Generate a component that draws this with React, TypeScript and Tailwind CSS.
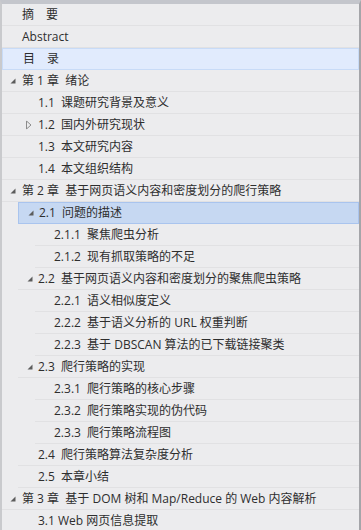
import React from "react";

type Arrow = "open" | "closed" | null;

interface Item {
  label: string;
  box: "l0" | "l1" | "l2";
  text: "t0" | "t1" | "t2";
  arrow?: Arrow;
  sel?: "light" | "strong";
}

// 目录树的每一行
const items: Item[] = [
  { label: "摘　要", box: "l0", text: "t0" },
  { label: "Abstract", box: "l0", text: "t0" },
  { label: "目　录", box: "l0", text: "t0", sel: "light" },
  { label: "第 1 章  绪论", box: "l0", text: "t0", arrow: "open" },
  { label: "1.1  课题研究背景及意义", box: "l0", text: "t1" },
  { label: "1.2  国内外研究现状", box: "l0", text: "t1", arrow: "closed" },
  { label: "1.3  本文研究内容", box: "l0", text: "t1" },
  { label: "1.4  本文组织结构", box: "l0", text: "t1" },
  { label: "第 2 章  基于网页语义内容和密度划分的爬行策略", box: "l0", text: "t0", arrow: "open" },
  { label: "2.1  问题的描述", box: "l1", text: "t1", arrow: "open", sel: "strong" },
  { label: "2.1.1  聚焦爬虫分析", box: "l2", text: "t2" },
  { label: "2.1.2  现有抓取策略的不足", box: "l2", text: "t2" },
  { label: "2.2  基于网页语义内容和密度划分的聚焦爬虫策略", box: "l1", text: "t1", arrow: "open" },
  { label: "2.2.1  语义相似度定义", box: "l2", text: "t2" },
  { label: "2.2.2  基于语义分析的 URL 权重判断", box: "l2", text: "t2" },
  { label: "2.2.3  基于 DBSCAN 算法的已下载链接聚类", box: "l2", text: "t2" },
  { label: "2.3  爬行策略的实现", box: "l1", text: "t1", arrow: "open" },
  { label: "2.3.1  爬行策略的核心步骤", box: "l2", text: "t2" },
  { label: "2.3.2  爬行策略实现的伪代码", box: "l2", text: "t2" },
  { label: "2.3.3  爬行策略流程图", box: "l2", text: "t2" },
  { label: "2.4  爬行策略算法复杂度分析", box: "l1", text: "t1" },
  { label: "2.5  本章小结", box: "l1", text: "t1" },
  { label: "第 3 章  基于 DOM 树和 Map/Reduce 的 Web 内容解析", box: "l0", text: "t0", arrow: "open" },
  { label: "3.1 Web 网页信息提取", box: "l0", text: "t1" },
];

const boxClass = { l0: "ml-0", l1: "ml-[16px]", l2: "ml-[33px]" };
// 文字起点相对于行框左边
const textClass = {
  l0: { t0: "pl-[20px]", t1: "pl-[36px]", t2: "pl-[52px]" },
  l1: { t0: "pl-[4px]", t1: "pl-[20px]", t2: "pl-[36px]" },
  l2: { t0: "pl-0", t1: "pl-[3px]", t2: "pl-[19px]" },
};

function ArrowIcon({ kind }: { kind: Arrow }) {
  if (kind === "open") {
    return (
      <svg width="6" height="6" viewBox="0 0 6 6" className="block">
        <polygon points="5.5,0.5 5.5,5.5 0.5,5.5" fill="#5c5c5c" />
      </svg>
    );
  }
  return (
    <svg width="6" height="9" viewBox="0 0 6 9" className="block">
      <polygon points="0.5,0.5 5,4.5 0.5,8.5" fill="none" stroke="#8c8c8c" strokeWidth="1" />
    </svg>
  );
}

function Row({ item }: { item: Item }) {
  const selStyle =
    item.sel === "light"
      ? "bg-[#e1ebfd] border border-[#c8dbf7]"
      : item.sel === "strong"
      ? "bg-[#c6d8f2] border border-[#a9c4ee]"
      : "border-b border-[#e1e1e3]";
  const arrowPos = item.text === "t0" ? "left-[8px]" : item.box === "l0" ? "left-[24px]" : "left-[9px]";
  return (
    <div className={`${boxClass[item.box]} relative h-[22px] box-border flex items-center ${selStyle}`}>
      {item.arrow && (
        <span className={`absolute ${arrowPos} top-1/2 -translate-y-1/2`}>
          <ArrowIcon kind={item.arrow} />
        </span>
      )}
      <span className={`${textClass[item.box][item.text]} whitespace-pre text-[12px] leading-none text-[#2e2e2e]`}>
        {item.label}
      </span>
    </div>
  );
}

export default function App() {
  return (
    <div
      className="w-[361px] h-[530px] overflow-hidden bg-[#ececee] border-t-4 border-t-[#c4c6cc] border-l-2 border-l-[#c9cacd] border-r-2 border-r-[#a4a5a9] box-border"
      style={{ fontFamily: '"Open Sans", "Noto Sans CJK SC", sans-serif' }}
    >
      <div className="flex flex-col">
        {items.map((it, i) => (
          <Row key={i} item={it} />
        ))}
      </div>
    </div>
  );
}
